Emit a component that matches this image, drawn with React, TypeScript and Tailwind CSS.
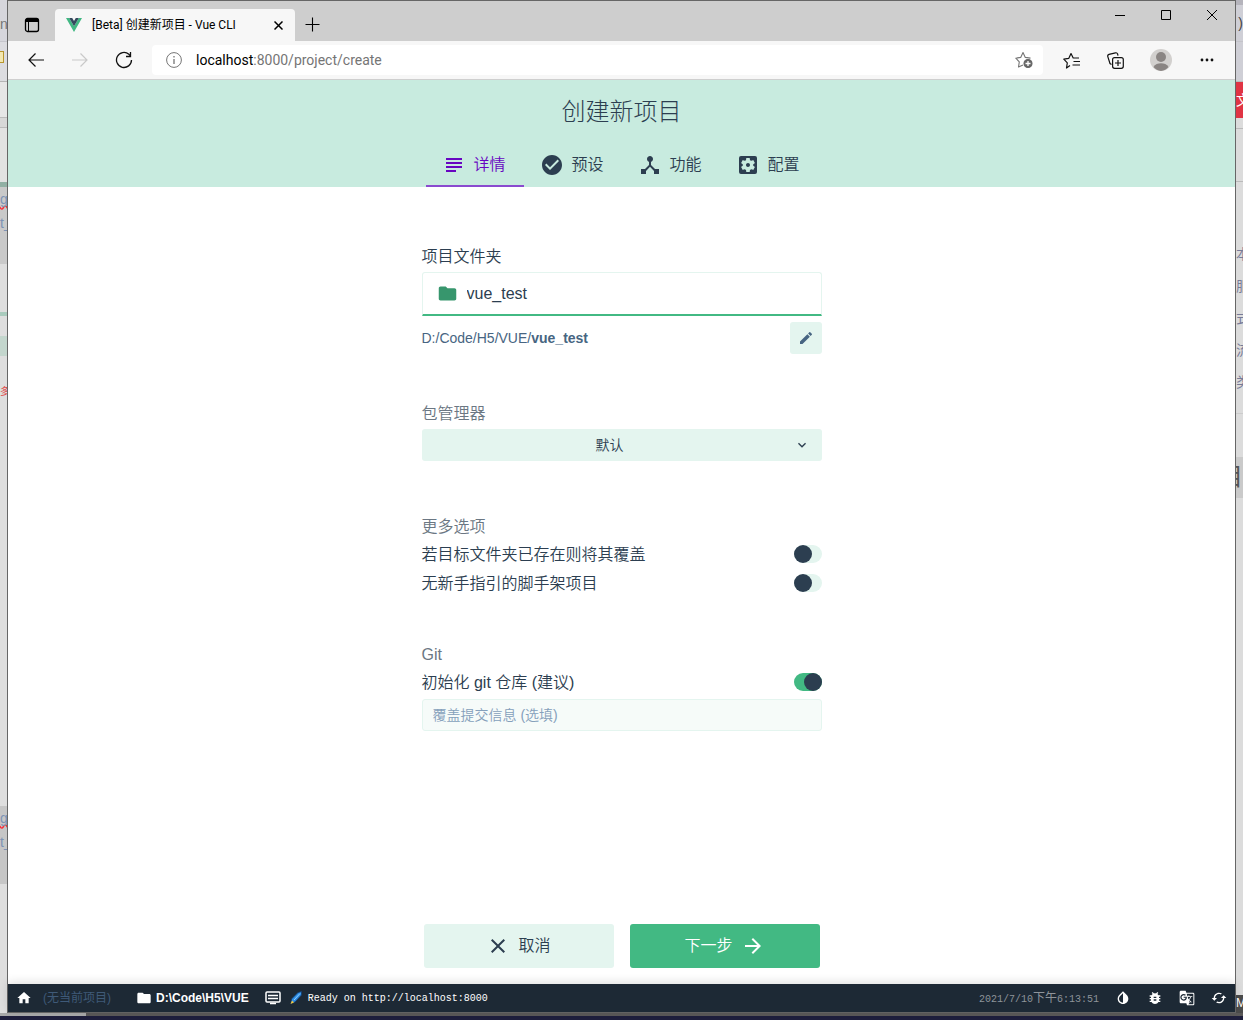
import React, { useState } from 'react'
import {
  MdBugReport,
  MdCached,
  MdCheckCircle,
  MdClose,
  MdArrowForward,
  MdDeviceHub,
  MdEdit,
  MdExpandMore,
  MdFolder,
  MdGTranslate,
  MdHome,
  MdInvertColors,
  MdSettingsApplications,
  MdSubject,
} from 'react-icons/md'

const tabs = [
  { id: 'details', label: '详情', icon: MdSubject },
  { id: 'presets', label: '预设', icon: MdCheckCircle },
  { id: 'features', label: '功能', icon: MdDeviceHub },
  { id: 'config', label: '配置', icon: MdSettingsApplications },
]

function ToolButton({ label, className = '', children }: { label: string; className?: string; children: React.ReactNode }) {
  return (
    <button type="button" aria-label={label} className={`flex h-[30px] w-11 shrink-0 items-center justify-center ${className}`}>
      {children}
    </button>
  )
}

function Toggle({ label, defaultChecked }: { label: string; defaultChecked?: boolean }) {
  return (
    <label className="flex h-[29px] items-center justify-between">
      <span className="pt-0.5">{label}</span>
      <input
        type="checkbox"
        defaultChecked={defaultChecked}
        className="h-[18px] w-7 appearance-none rounded-full bg-[#e4f5ef] before:block before:size-[18px] before:rounded-full before:bg-[#2c3e50] checked:bg-[#42b983] checked:before:ml-[10px]"
      />
    </label>
  )
}

/* Edges of the windows lying behind the browser */
function Backdrop() {
  return (
    <div aria-hidden="true" className="absolute inset-0 flex flex-col bg-[#d8d8d8] text-sm">
      <div className="flex min-h-0 flex-1 justify-between">
        <div className="flex w-[7px] flex-col overflow-hidden bg-[#dedede] whitespace-nowrap">
          <div className="h-[42px] border-b border-[#c6c6cc] bg-[#d6d6dc] pt-[14px] text-[#777]">n</div>
          <div className="h-[40px] border-b border-[#b5b5b5] bg-[#dcdce0] pt-[9px]">
            <div className="h-3 w-1 border border-l-0 border-[#b8962e] bg-[#f3e7b0]" />
          </div>
          <div className="h-[36px] border-b border-[#bbb] bg-[#e6e6e6]" />
          <div className="h-[10px] border-b border-[#bbb] bg-[#d8d8d8]" />
          <div className="h-[54px] bg-[#e2e2e2]" />
          <div className="h-[5px] bg-[#91b0a4]" />
          <div className="h-[77px] bg-[#c9c9c9] leading-6 text-[#7d93b5]">
            <div className="underline decoration-red-500 decoration-wavy [text-decoration-skip-ink:none]">g</div>
            <div>t_</div>
          </div>
          <div className="h-[48px]" />
          <div className="h-1 bg-[#a9cbbd]" />
          <div className="h-5" />
          <div className="h-5 bg-[#c3d6cd]" />
          <div className="h-[450px] pt-[29px] text-[10px] text-[#e04848]">多</div>
          <div className="h-[78px] bg-[#c6c6c6] leading-6 text-[#7d93b5]">
            <div className="underline decoration-red-500 decoration-wavy [text-decoration-skip-ink:none]">g</div>
            <div>t_</div>
          </div>
          <div className="flex-1" />
        </div>
        <div className="flex w-[7px] flex-col overflow-hidden bg-[#dcdcdc] whitespace-nowrap">
          <div className="h-[5px] bg-[#b5b4bc]" />
          <div className="flex h-[37px] items-center justify-end border-b border-[#c4c4ca] bg-[#cfcfd6] text-[#444]">)</div>
          <div className="h-[40px] border-b border-[#bbb] bg-[#cfcfd6]" />
          <div className="h-[36px] overflow-hidden bg-[#e03444] pt-2 text-white">文</div>
          <div className="h-[11px] border-b border-[#bbb]" />
          <div className="h-[53px] border-b border-[#bbb]" />
          <div className="h-[56px]" />
          <div className="h-[175px] leading-8 text-[#777b98]">
            <div>本</div>
            <div>服</div>
            <div>式</div>
            <div>流</div>
            <div>类</div>
          </div>
          <div className="h-[44px] border-t border-[#ccc]" />
          <div className="flex h-[41px] justify-end bg-[#cacaca] text-2xl leading-10 text-[#555]">目</div>
          <div className="flex-1" />
          <div className="h-[18px] bg-[#4b4b4b] text-xs text-white">M</div>
        </div>
      </div>
      <div className="flex h-[7px] flex-col">
        <div className="flex h-[3px]">
          <div className="w-[86px] bg-[#a8a8a8]" />
          <div className="flex-1 bg-[#5a5858]" />
        </div>
        <div className="flex-1 bg-[#1e1e3c]" />
      </div>
    </div>
  )
}

function TitleBar() {
  return (
    <div className="flex h-10 items-end bg-[#cecece] text-black">
      <button type="button" aria-label="Tab actions" className="flex h-8 w-[47px] items-center justify-center">
        <svg width="16" height="16" viewBox="0 0 16 16" fill="none" stroke="currentColor">
          <rect x="1.5" y="1.5" width="13" height="13" rx="2" strokeWidth="1.3" />
          <path d="M2 3.5h12" strokeWidth="3" />
          <path d="M4.5 5v9" />
        </svg>
      </button>
      <div className="flex h-8 w-60 items-center rounded-t bg-[#f7f7f7] pr-2 pl-[11px]">
        <svg width="16" height="14" viewBox="0 0 16 14" className="shrink-0">
          <path d="M0 0h3.2L8 8.3 12.8 0H16L8 14z" fill="#41b883" />
          <path d="M3.2 0h3L8 3.1 9.8 0h3L8 8.3z" fill="#35495e" />
        </svg>
        <span className="ml-[10px] flex-1 truncate text-xs">[Beta] 创建新项目 - Vue CLI</span>
        <button type="button" aria-label="Close tab" className="flex size-[18px] items-center justify-center">
          <svg width="9" height="9" viewBox="0 0 9 9" stroke="currentColor" strokeWidth="1.5">
            <path d="M.5.5l8 8M8.5.5l-8 8" />
          </svg>
        </button>
      </div>
      <button type="button" aria-label="New tab" className="flex h-[33px] w-[35px] items-center justify-center">
        <svg width="15" height="15" viewBox="0 0 15 15" stroke="currentColor" strokeWidth="1.1">
          <path d="M7.5.5v14M.5 7.5h14" />
        </svg>
      </button>
      <div className="ml-auto flex self-start">
        <button type="button" aria-label="Minimize" className="flex h-7 w-[46px] items-center justify-center">
          <svg width="10" height="10" viewBox="0 0 10 10" stroke="currentColor">
            <path d="M0 5.5h10" />
          </svg>
        </button>
        <button type="button" aria-label="Maximize" className="flex h-7 w-[46px] items-center justify-center">
          <svg width="10" height="10" viewBox="0 0 10 10" fill="none" stroke="currentColor">
            <path d="M.5.5h9v9h-9z" />
          </svg>
        </button>
        <button type="button" aria-label="Close" className="flex h-7 w-[46px] items-center justify-center">
          <svg width="10" height="10" viewBox="0 0 10 10" stroke="currentColor">
            <path d="M0 0l10 10M10 0L0 10" />
          </svg>
        </button>
      </div>
    </div>
  )
}

function AddressBar() {
  return (
    <div className="flex h-[39px] items-center border-b border-[#cfcfcf] bg-[#f7f7f7] px-[6px] text-[#111]">
      <ToolButton label="Back">
        <svg width="16" height="14" viewBox="0 0 16 14" fill="none" stroke="currentColor" strokeWidth="1.2">
          <path d="M16 7H1M7.5.5L1 7l6.5 6.5" />
        </svg>
      </ToolButton>
      <ToolButton label="Forward" className="text-[#c9c9c9]">
        <svg width="16" height="14" viewBox="0 0 16 14" fill="none" stroke="currentColor" strokeWidth="1.2">
          <path d="M0 7h15M8.5.5L15 7l-6.5 6.5" />
        </svg>
      </ToolButton>
      <ToolButton label="Reload">
        <svg width="18" height="18" viewBox="0 0 18 18" fill="none" stroke="currentColor" strokeWidth="1.3">
          <path d="M16.5 9a7.5 7.5 0 1 1-2.6-5.7L15.5 5" />
          <path d="M15.5 1v4.5H11" />
        </svg>
      </ToolButton>
      <div className="mx-[6px] flex h-[30px] flex-1 items-center rounded bg-white">
        <svg width="16" height="16" viewBox="0 0 16 16" fill="none" stroke="#757575" className="ml-[14px] shrink-0">
          <circle cx="8" cy="8" r="7.4" />
          <path d="M8 7v5M8 4v1.5" strokeWidth="1.3" />
        </svg>
        <div className="ml-[14px] flex-1 text-sm text-[#757575]">
          <span className="text-black">localhost</span>:8000/project/create
        </div>
        <button type="button" aria-label="Add to favorites" className="flex h-[30px] w-[38px] items-center justify-center">
          <svg width="18" height="18" viewBox="0 0 18 18" fill="none" stroke="#757575" strokeWidth="1.1">
            <path d="M8 14l-4.5 2 .8-5.2L.8 7.2l4.900-.8L8 1.500l2.300 4.900 5.200.7" strokeLinejoin="round" />
            <circle cx="13" cy="12.5" r="4" fill="#666" stroke="#666" />
            <path d="M13 10v5M10.5 12.5h5" stroke="#fff" strokeWidth="1.3" />
          </svg>
        </button>
      </div>
      <ToolButton label="Favorites">
        <svg width="17" height="17" viewBox="0 0 17 17" fill="none" stroke="currentColor" strokeWidth="1.2">
          <path d="M7 13.500L3.500 16l.8-5.200L.8 7.200l4.900-.8L8 1.500l2.200 4.500H16" strokeLinejoin="round" />
          <path d="M10.5 9.5H17M9.5 13H17" />
        </svg>
      </ToolButton>
      <ToolButton label="Collections">
        <svg width="17" height="17" viewBox="0 0 17 17" fill="none" stroke="currentColor" strokeWidth="1.2">
          <path d="M4.500 12.500l-1.500-1L.8 4.600a1.800 1.800 0 0 1 1.200-2.200L8.500.8a1.800 1.800 0 0 1 2.100 1.200l.4 1.700" />
          <rect x="5.6" y="5.6" width="10.7" height="10.7" rx="2" />
          <path d="M11 8v6M8 11h6" />
        </svg>
      </ToolButton>
      <ToolButton label="Profile" className="ml-0.5">
        <svg width="22" height="22" viewBox="0 0 22 22">
          <circle cx="11" cy="11" r="11" fill="#d2d0ce" />
          <circle cx="11" cy="8" r="5" fill="#8a8583" />
          <path d="M3.500 18c1.500-3 4.500-3.800 7.500-3.800s6 .8 7.500 3.800A11 11 0 0 1 11 22a11 11 0 0 1-7.500-4z" fill="#8a8583" />
        </svg>
      </ToolButton>
      <ToolButton label="Settings and more" className="ml-0.5">
        <svg width="14" height="4" viewBox="0 0 14 4" fill="currentColor">
          <circle cx="2" cy="2" r="1.4" />
          <circle cx="7" cy="2" r="1.4" />
          <circle cx="12" cy="2" r="1.4" />
        </svg>
      </ToolButton>
    </div>
  )
}

function StatusBar() {
  return (
    <footer className="relative flex h-7 items-center bg-[#1d2935] px-2 text-xs text-white shadow-[0_-2px_10px_rgba(0,0,0,0.12)]">
      <a href="#home" aria-label="Home">
        <MdHome className="size-4" />
      </a>
      <span className="ml-[11px] text-[#3f5a78]">(无当前项目)</span>
      <MdFolder className="ml-[25px] size-4" />
      <span className="ml-1 font-bold">D:\Code\H5\VUE</span>
      <svg width="16" height="14" viewBox="0 0 16 14" className="ml-4 shrink-0">
        <rect x="1" y="1" width="14" height="10" rx="1" fill="none" stroke="#fff" strokeWidth="1.5" />
        <path d="M3 4.500h10M3 7.500h10M5 12.500h6" stroke="#fff" strokeWidth="1.5" />
      </svg>
      <svg width="14" height="14" viewBox="0 0 14 14" className="ml-2 shrink-0">
        <path d="M12.500.5L9 1.500 2.500 8 2 12.500 6 11 12.500 4z" fill="#2f8de4" stroke="#123a6b" strokeWidth=".8" />
        <path d="M11 2.500L5 9" stroke="#8fd0ff" />
        <path d="M3 9.500L1.500 13 5 11.500z" fill="#f5c83a" />
      </svg>
      <span className="ml-[5px] pt-0.5 font-['Liberation_Mono','Noto_Sans_CJK_SC',monospace] text-[10px]">Ready on http://localhost:8000</span>
      <div className="ml-auto flex items-center">
        <time className="mr-4 pt-0.5 font-['Liberation_Mono','Noto_Sans_CJK_SC',monospace] text-[10px] text-[#8e949a]">
          2021/7/10<span className="text-xs">下午</span>6:13:51
        </time>
        <div className="flex items-center gap-4">
          <button type="button" aria-label="Toggle dark mode">
            <MdInvertColors className="size-4" />
          </button>
          <button type="button" aria-label="Report a bug">
            <MdBugReport className="size-4" />
          </button>
          <button type="button" aria-label="Translate">
            <MdGTranslate className="size-4" />
          </button>
          <button type="button" aria-label="Refresh">
            <MdCached className="size-4" />
          </button>
        </div>
      </div>
    </footer>
  )
}

export default function App() {
  const [activeTab, setActiveTab] = useState('details')

  return (
    <div className="relative flex min-h-screen flex-col px-[7px] pb-[7px] font-['Liberation_Sans','Noto_Sans_CJK_SC',sans-serif]">
      <Backdrop />

      <div className="relative flex flex-1 flex-col border border-[#666] bg-white">
        <div className="font-['Roboto','Noto_Sans_CJK_SC',sans-serif]">
          <TitleBar />
          <AddressBar />
        </div>

        {/* Page header with wizard steps */}
        <header className="flex flex-col items-center bg-[#c8ebdf] text-[#2c3e50]">
          <h1 className="text-2xl leading-[63px] font-light">创建新项目</h1>
          <nav className="flex">
            {tabs.map(({ id, label, icon: Icon }) => (
              <button
                key={id}
                type="button"
                onClick={() => setActiveTab(id)}
                className={`flex h-11 w-[98px] items-center gap-2 border-b-2 px-4 pt-0.5 font-[350] ${
                  activeTab === id ? 'border-[#8a4bcf] text-[#6806c1]' : 'border-transparent'
                }`}
              >
                <Icon className="size-6 shrink-0" />
                {label}
              </button>
            ))}
          </nav>
        </header>

        <main className="flex flex-1 flex-col items-center pb-4 font-[350] text-[#2c3e50]">
          <form className="w-full max-w-[400px] pt-[58px]">
            <label htmlFor="folder" className="mb-[3px] block leading-6">
              项目文件夹
            </label>
            <div className="flex h-11 items-center rounded-t-[3px] border border-b-2 border-[#e4f5ef] border-b-[#42b983] pl-[14px]">
              <MdFolder className="size-[21px] shrink-0 text-[#37966d]" />
              <input id="folder" type="text" defaultValue="vue_test" className="ml-[9px] min-w-0 flex-1 outline-none" />
            </div>
            <div className="mt-[6px] flex items-center justify-between text-sm text-[#476582]">
              <span>
                D:/Code/H5/VUE/<b className="font-bold">vue_test</b>
              </span>
              <button type="button" aria-label="Edit folder" className="flex size-8 items-center justify-center rounded-[3px] bg-[#e4f5ef]">
                <MdEdit className="size-4" />
              </button>
            </div>

            <label htmlFor="manager" className="mt-12 mb-[3px] block leading-6 text-[#6b7783]">
              包管理器
            </label>
            <div className="relative">
              <select
                id="manager"
                className="h-8 w-full appearance-none rounded-[3px] bg-[#e4f5ef] pr-6 text-center text-sm"
              >
                <option>默认</option>
              </select>
              <MdExpandMore className="pointer-events-none absolute top-2 right-3 size-4" />
            </div>

            <fieldset className="mt-[54px]">
              <legend className="leading-6 text-[#6b7783]">更多选项</legend>
              <Toggle label="若目标文件夹已存在则将其覆盖" />
              <Toggle label="无新手指引的脚手架项目" />
            </fieldset>

            <fieldset className="mt-[46px]">
              <legend className="leading-6 text-[#6b7783]">Git</legend>
              <Toggle label="初始化 git 仓库 (建议)" defaultChecked />
              <input
                type="text"
                aria-label="覆盖提交信息 (选填)"
                placeholder="覆盖提交信息 (选填)"
                className="mt-[3px] block h-8 w-full rounded-[3px] border border-[#e4f5ef] bg-[#f6fbf9] px-[10px] text-sm placeholder:text-[#85a0bb]"
              />
            </fieldset>
          </form>

          <div className="mt-auto flex gap-4 pt-8">
            <button type="button" className="flex h-11 w-[190px] items-center justify-center gap-2 rounded-[3px] bg-[#e4f5ef]">
              <MdClose className="size-6" />
              取消
            </button>
            <button type="button" className="flex h-11 w-[190px] items-center justify-center gap-2 rounded-[3px] bg-[#42b983] text-white">
              下一步
              <MdArrowForward className="size-6" />
            </button>
          </div>
        </main>

        <StatusBar />
      </div>
    </div>
  )
}
